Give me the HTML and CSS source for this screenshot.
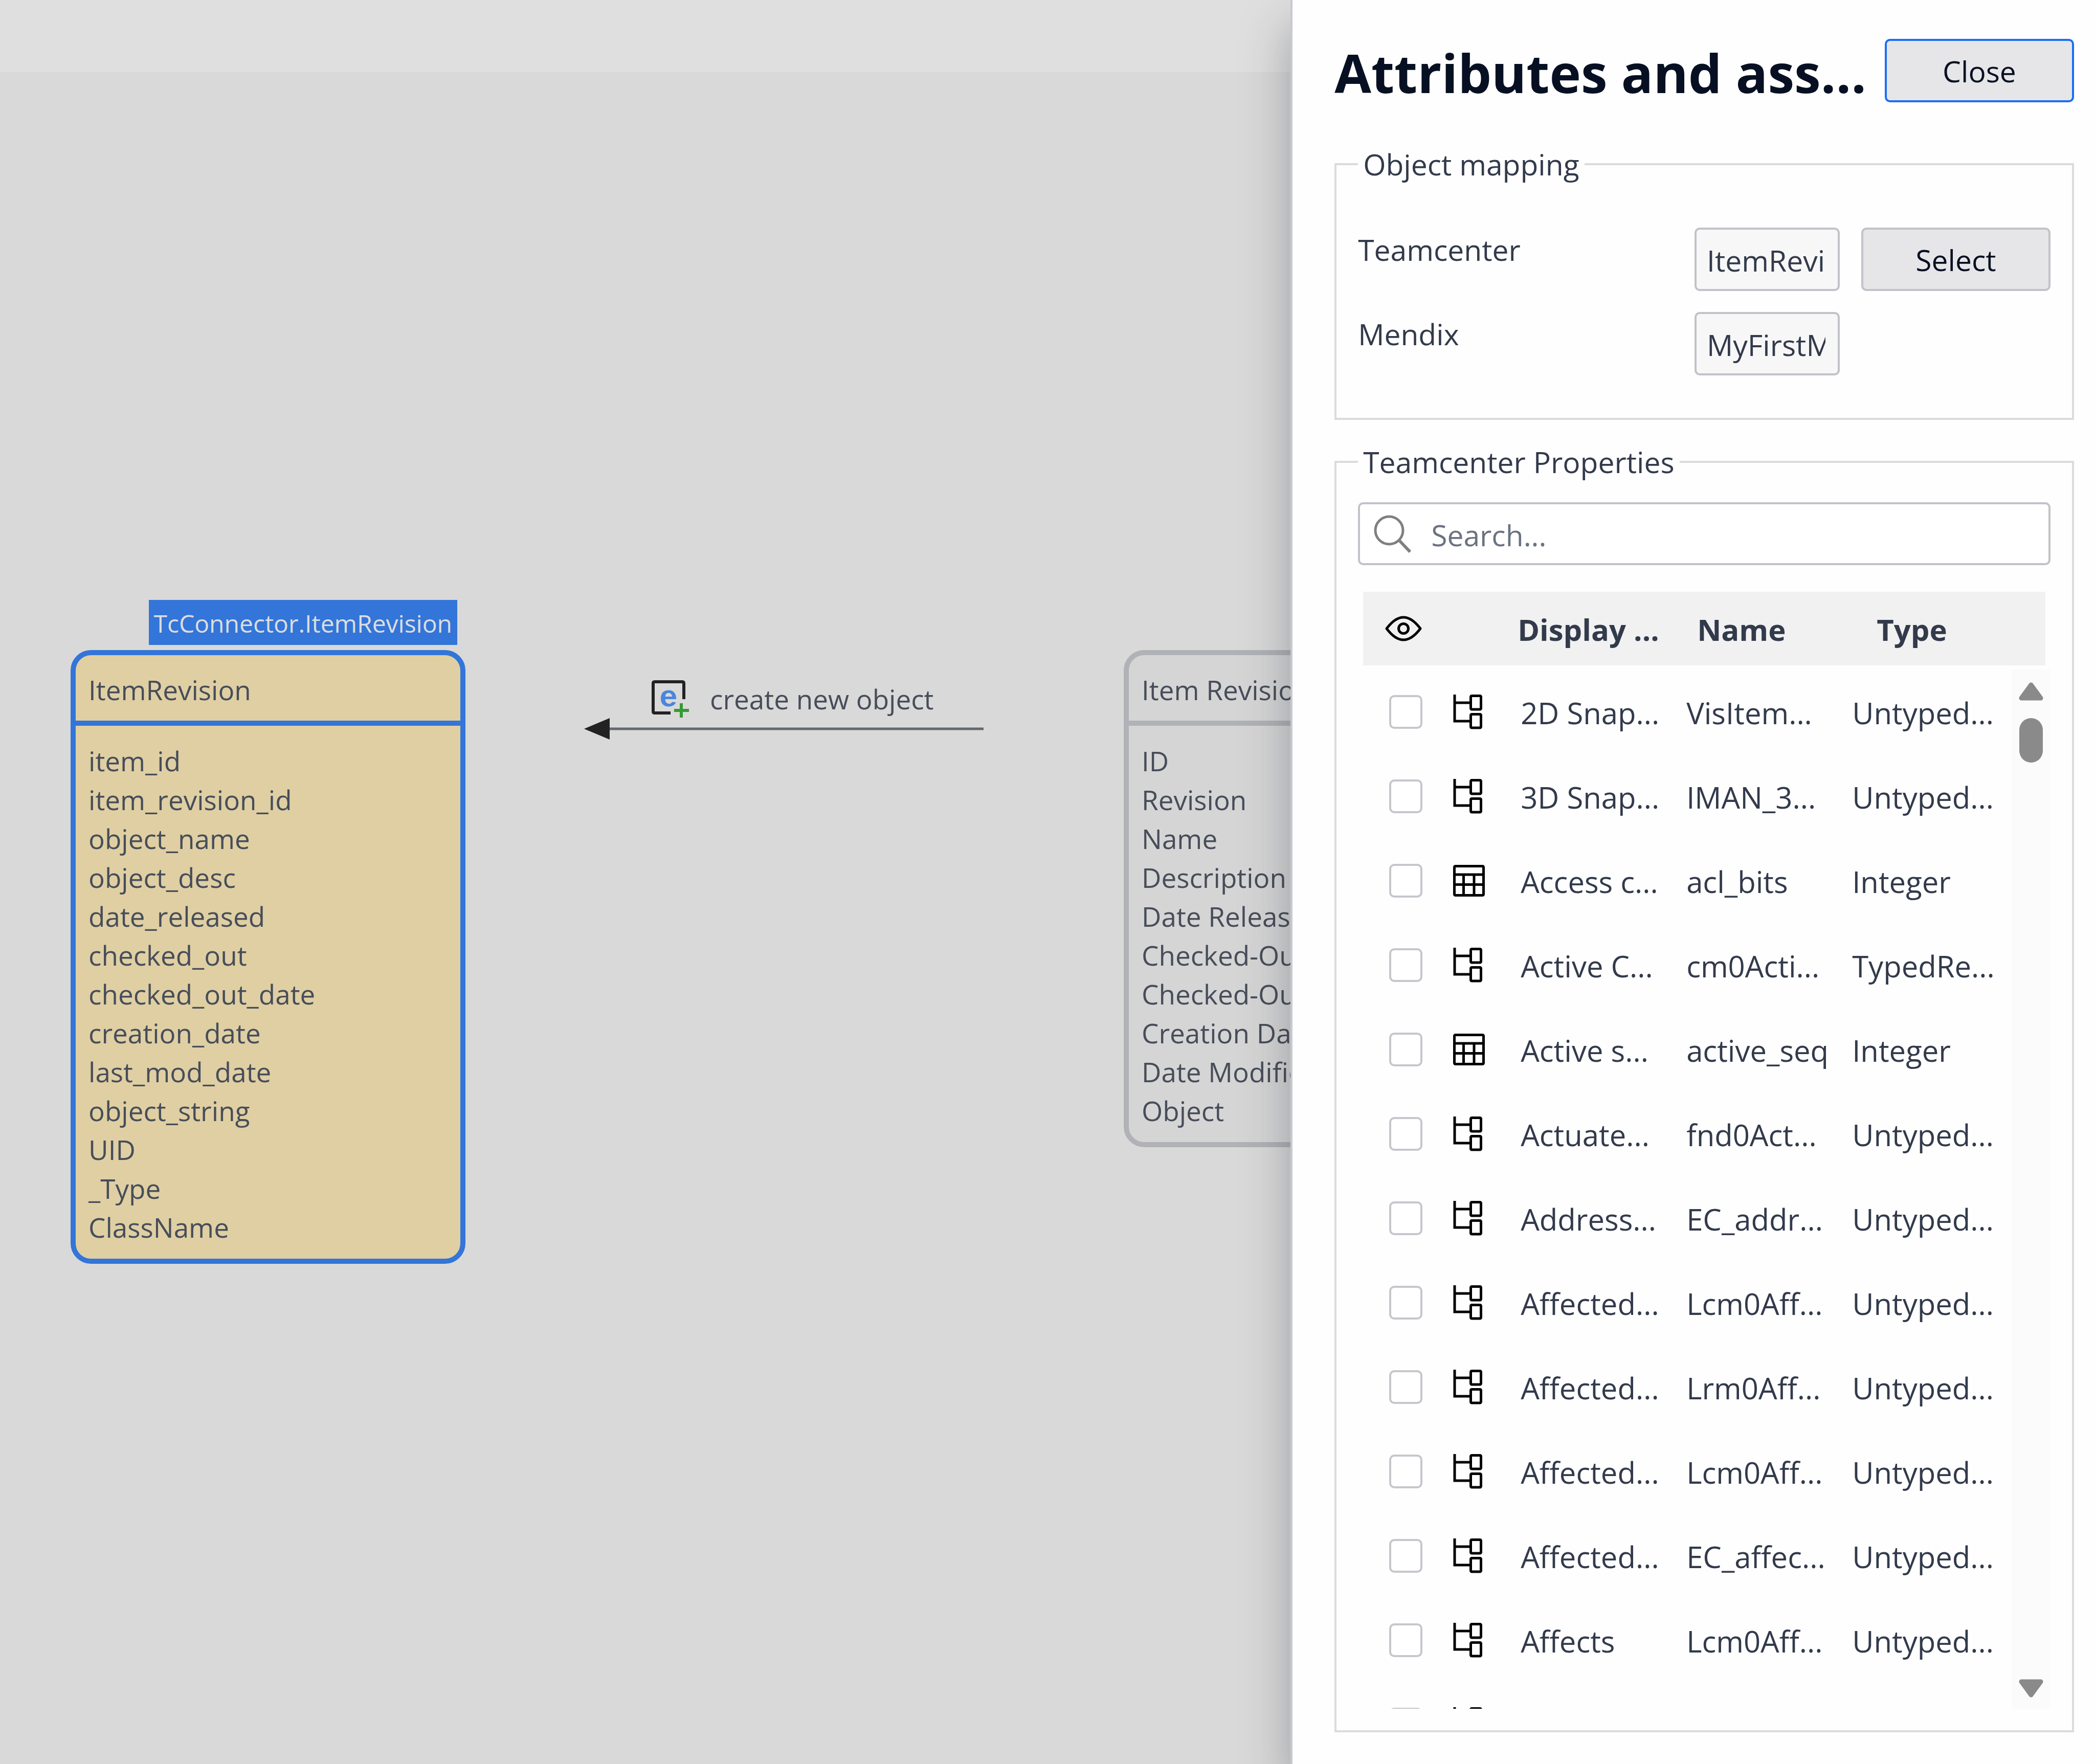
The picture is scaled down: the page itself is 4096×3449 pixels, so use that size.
FILE: index.html
```html
<!DOCTYPE html>
<html lang="en">
<head>
<meta charset="utf-8">
<title>Attributes and associations</title>
<link rel="stylesheet" href="styles.css">
</head>
<body>
<svg class="sprite" aria-hidden="true">
  <symbol id="tree" viewBox="0 0 58 68">
    <path d="M3 0V52H33M3 16H33" fill="none" stroke="#000" stroke-width="5"/>
    <rect x="34.500" y="2.500" width="20" height="26.500" rx="2" fill="none" stroke="#000" stroke-width="5"/>
    <rect x="34.500" y="38.500" width="20" height="26.500" rx="2" fill="none" stroke="#000" stroke-width="5"/>
  </symbol>
  <symbol id="sheet" viewBox="0 0 62 62">
    <rect x="2.500" y="2.500" width="57" height="57" rx="2" fill="none" stroke="#000" stroke-width="5"/>
    <path d="M2 19H60M2 38.500H60M20.500 19V60M41 19V60" fill="none" stroke="#000" stroke-width="5"/>
  </symbol>
</svg>
<main class="app">
  <div class="topbar"></div>
  <div class="canvas">
    <section class="entity entity-target">
      <span class="entity-tag">TcConnector.ItemRevision</span>
      <h2 class="entity-name">ItemRevision</h2>
      <ul class="entity-fields">
        <li>item_id</li><li>item_revision_id</li><li>object_name</li><li>object_desc</li><li>date_released</li><li>checked_out</li><li>checked_out_date</li><li>creation_date</li><li>last_mod_date</li><li>object_string</li><li>UID</li><li>_Type</li><li>ClassName</li>
      </ul>
    </section>
    <div class="connector">
      <div class="connector-label">
        <svg class="create-icon" viewBox="0 0 74 74" aria-hidden="true">
          <path d="M37 64H6Q3 64 3 61V6Q3 3 6 3H60Q63 3 63 6V37" fill="none" stroke="#222" stroke-width="6"/>
          <text x="33" y="51" text-anchor="middle" class="create-letter">e</text>
          <path d="M58 45V73M44 59H73" stroke="#339b33" stroke-width="6"/>
        </svg>
        <span>create new object</span>
      </div>
      <svg class="connector-line" viewBox="0 0 781 42" aria-hidden="true">
        <path d="M49 21H781" stroke="#646870" stroke-width="5"/>
        <path d="M0 21L50 0V42Z" fill="#222"/>
      </svg>
    </div>
    <section class="entity entity-source">
      <h2 class="entity-name">Item Revision</h2>
      <ul class="entity-fields">
        <li>ID</li><li>Revision</li><li>Name</li><li>Description</li><li>Date Released</li><li>Checked-Out</li><li>Checked-Out Date</li><li>Creation Date</li><li>Date Modified</li><li>Object</li>
      </ul>
    </section>
  </div>
</main>
<aside class="panel">
  <header class="panel-head">
    <h1>Attributes and ass...</h1>
    <button type="button" class="btn btn-focus">Close</button>
  </header>
  <fieldset class="group mapping">
    <legend>Object mapping</legend>
    <div class="mapping-grid">
      <label for="tc">Teamcenter</label>
      <input id="tc" class="field" type="text" value="ItemRevision" readonly>
      <button type="button" class="btn">Select</button>
      <label for="mx">Mendix</label>
      <input id="mx" class="field" type="text" value="MyFirstModule.ItemRevision" readonly>
    </div>
  </fieldset>
  <fieldset class="group props">
    <legend>Teamcenter Properties</legend>
    <div class="search">
      <svg class="search-icon" viewBox="0 0 74 74" aria-hidden="true"><circle cx="30" cy="30" r="27" fill="none" stroke="#808080" stroke-width="5"/><path d="M50 50L71 72" stroke="#808080" stroke-width="6"/></svg>
      <input type="search" aria-label="Search" placeholder="Search...">
    </div>
    <div class="list">
      <table>
        <thead><tr>
          <th scope="col"><svg class="eye" viewBox="0 0 72 50" role="img" aria-label="Visible"><path d="M3 25Q36 -19 69 25Q36 69 3 25Z" fill="none" stroke="#000" stroke-width="5" stroke-linejoin="round"/><circle cx="36" cy="25" r="9.500" fill="none" stroke="#000" stroke-width="5"/></svg></th>
          <th scope="col">Display ...</th><th scope="col">Name</th><th scope="col">Type</th>
        </tr></thead>
        <tbody>
          <tr><td><input type="checkbox" id="p1"></td><td><svg class="kind"><use href="#tree"/></svg></td><td><label for="p1">2D Snap...</label></td><td>VisItem...</td><td>Untyped...</td></tr>
          <tr><td><input type="checkbox" id="p2"></td><td><svg class="kind"><use href="#tree"/></svg></td><td><label for="p2">3D Snap...</label></td><td>IMAN_3...</td><td>Untyped...</td></tr>
          <tr><td><input type="checkbox" id="p3"></td><td><svg class="kind sheet"><use href="#sheet"/></svg></td><td><label for="p3">Access c...</label></td><td>acl_bits</td><td>Integer</td></tr>
          <tr><td><input type="checkbox" id="p4"></td><td><svg class="kind"><use href="#tree"/></svg></td><td><label for="p4">Active C...</label></td><td>cm0Acti...</td><td>TypedRe...</td></tr>
          <tr><td><input type="checkbox" id="p5"></td><td><svg class="kind sheet"><use href="#sheet"/></svg></td><td><label for="p5">Active s...</label></td><td>active_seq</td><td>Integer</td></tr>
          <tr><td><input type="checkbox" id="p6"></td><td><svg class="kind"><use href="#tree"/></svg></td><td><label for="p6">Actuate...</label></td><td>fnd0Act...</td><td>Untyped...</td></tr>
          <tr><td><input type="checkbox" id="p7"></td><td><svg class="kind"><use href="#tree"/></svg></td><td><label for="p7">Address...</label></td><td>EC_addr...</td><td>Untyped...</td></tr>
          <tr><td><input type="checkbox" id="p8"></td><td><svg class="kind"><use href="#tree"/></svg></td><td><label for="p8">Affected...</label></td><td>Lcm0Aff...</td><td>Untyped...</td></tr>
          <tr><td><input type="checkbox" id="p9"></td><td><svg class="kind"><use href="#tree"/></svg></td><td><label for="p9">Affected...</label></td><td>Lrm0Aff...</td><td>Untyped...</td></tr>
          <tr><td><input type="checkbox" id="p10"></td><td><svg class="kind"><use href="#tree"/></svg></td><td><label for="p10">Affected...</label></td><td>Lcm0Aff...</td><td>Untyped...</td></tr>
          <tr><td><input type="checkbox" id="p11"></td><td><svg class="kind"><use href="#tree"/></svg></td><td><label for="p11">Affected...</label></td><td>EC_affec...</td><td>Untyped...</td></tr>
          <tr><td><input type="checkbox" id="p12"></td><td><svg class="kind"><use href="#tree"/></svg></td><td><label for="p12">Affects</label></td><td>Lcm0Aff...</td><td>Untyped...</td></tr>
          <tr><td><input type="checkbox" id="p13" aria-label="Property"></td><td><svg class="kind"><use href="#tree"/></svg></td><td></td><td></td><td></td></tr>
        </tbody>
      </table>
      <div class="scrollbar" aria-hidden="true">
        <svg class="arrow" viewBox="0 0 48 36"><path d="M24 5L43 31H5Z" fill="#8a8a8a" stroke="#8a8a8a" stroke-width="9" stroke-linejoin="round"/></svg>
        <div class="thumb"></div>
        <svg class="arrow arrow-down" viewBox="0 0 48 36"><path d="M24 31L43 5H5Z" fill="#8a8a8a" stroke="#8a8a8a" stroke-width="9" stroke-linejoin="round"/></svg>
      </div>
    </div>
  </fieldset>
</aside>
</body>
</html>
```
FILE: styles.css
```css
* { box-sizing: border-box; }
body {
  margin: 0;
  height: 100vh;
  overflow: hidden;
  position: relative;
  font-family: "Open Sans", "Noto Sans", sans-serif;
  font-size: 57px;
  line-height: 78px;
  color: #323a4b;
}
h1, h2, ul { margin: 0; padding: 0; }
.sprite { position: absolute; width: 0; height: 0; }

.app { height: 100%; display: flex; flex-direction: column; background: #d9d9d9; }
.topbar { height: 141px; background: #dfdfdf; }
.canvas { flex: 1; position: relative; font-size: 53px; line-height: 76px; color: #474d59; }

/* Entities are nodes placed on the free canvas */
.entity { position: absolute; top: 1130px; width: 772px; border: 10px solid #b0b2b7; border-radius: 40px; background: #d5d5d5; }
.entity-target { left: 138px; border-color: #3375d8; background: #dfcfa3; }
.entity-source { left: 2197px; }
.entity-tag { position: absolute; right: 6px; bottom: 100%; margin-bottom: 20px; padding: 8px 10px 4px; background: #3375d8; color: #dcdde0; font-size: 48px; white-space: nowrap; }
.entity-name { padding: 30px 25px 22px; border-bottom: 10px solid; border-color: inherit; font-size: inherit; font-weight: 400; }
.entity-fields { list-style: none; padding: 31px 25px 23px; white-space: nowrap; }

.connector { position: absolute; left: 1142px; top: 1189px; width: 781px; }
.connector-label { display: flex; align-items: center; padding-left: 132px; gap: 40px; height: 74px; }
.create-icon { width: 74px; height: 74px; }
.create-letter { font: bold 60px "Liberation Mono", monospace; fill: #4a86dc; }
.connector-line { display: block; width: 100%; height: 42px; }

.panel {
  position: absolute;
  top: 0; right: 0; bottom: 0;
  width: 38.4%;
  padding: 76px 41px 62px 82px;
  display: flex;
  flex-direction: column;
  background: #fefefe;
  border-left: 4px solid #c8cacf;
  box-shadow: 0 48px 88px rgba(40, 45, 55, .34);
}
.panel-head { display: flex; align-items: center; justify-content: space-between; gap: 30px; margin-bottom: 82px; }
h1 { padding-top: 8px; font-size: 104px; line-height: 116px; font-weight: 700; color: #071022; white-space: nowrap; }

.btn { width: 370px; height: 124px; padding: 2px 0 0; border: 4px solid #c2c3c9; border-radius: 10px; background: #e6e6e8; font: inherit; color: #071022; }
.btn-focus { border-color: #1a6ff5; }

.group { margin: 0; padding: 0 42px; border: 4px solid #dadbdd; min-width: 0; }
.group legend { padding: 0 10px; }
.mapping { margin-bottom: 43px; padding-top: 85px; padding-bottom: 83px; }
.mapping-grid { display: grid; grid-template-columns: 1fr 284px 370px; column-gap: 42px; row-gap: 41px; align-items: start; }
.mapping-grid label { padding-top: 4px; }
.field { width: 100%; height: 124px; padding: 4px 24px 0 20px; border: 4px solid #c2c3c9; border-radius: 10px; background: #f7f7f7; font: inherit; color: inherit; }

.props { flex: 1; min-height: 0; display: flex; flex-direction: column; padding-top: 40px; padding-bottom: 42px; }
.search { display: flex; align-items: center; gap: 38px; height: 123px; padding-left: 27px; border: 4px solid #c2c3c9; border-radius: 10px; background: #fff; }
.search-icon { width: 74px; height: 74px; flex: none; }
.search input { flex: 1; min-width: 0; height: 100%; padding: 4px 0 0; border: 0; outline: 0; background: none; font: inherit; color: inherit; }
.search input::placeholder { color: #6b7280; opacity: 1; }

.list { flex: 1; min-height: 0; margin-top: 52px; display: grid; grid-template-columns: 1fr 76px; grid-template-rows: 144px minmax(0, 1fr); row-gap: 8px; font-size: 58px; }
table { display: contents; }
thead { grid-column: 1 / -1; display: block; margin: 0 10px; background: #f1f1f1; }
thead tr { height: 100%; display: grid; grid-template-columns: 302px 351px 351px 1fr; align-items: center; }
th { padding: 4px 0 0; text-align: left; font-weight: 700; white-space: nowrap; }
th:first-child { padding: 0 0 0 43px; }
.eye { display: block; width: 72px; height: 50px; }
tbody { display: block; overflow: hidden; }
tbody tr { display: grid; grid-template-columns: 125px 132px 324px 324px 1fr; padding-left: 61px; height: 165px; align-items: center; }
td { padding: 5px 0 0; white-space: nowrap; }
td:nth-child(-n+2) { padding: 0; }
input[type="checkbox"] { appearance: none; display: block; width: 65px; height: 66px; margin: 0; border: 4px solid #c6c7cc; border-radius: 10px; background: #fff; }
.kind { display: block; width: 58px; height: 68px; }
.sheet { width: 62px; height: 62px; }
.scrollbar { display: flex; flex-direction: column; align-items: center; padding: 25px 0 22px; background: #fbfbfb; }
.arrow { width: 48px; height: 36px; flex: none; }
.thumb { width: 46px; height: 87px; margin-top: 34px; border-radius: 23px; background: #8a8a8a; }
.arrow-down { margin-top: auto; }
```
